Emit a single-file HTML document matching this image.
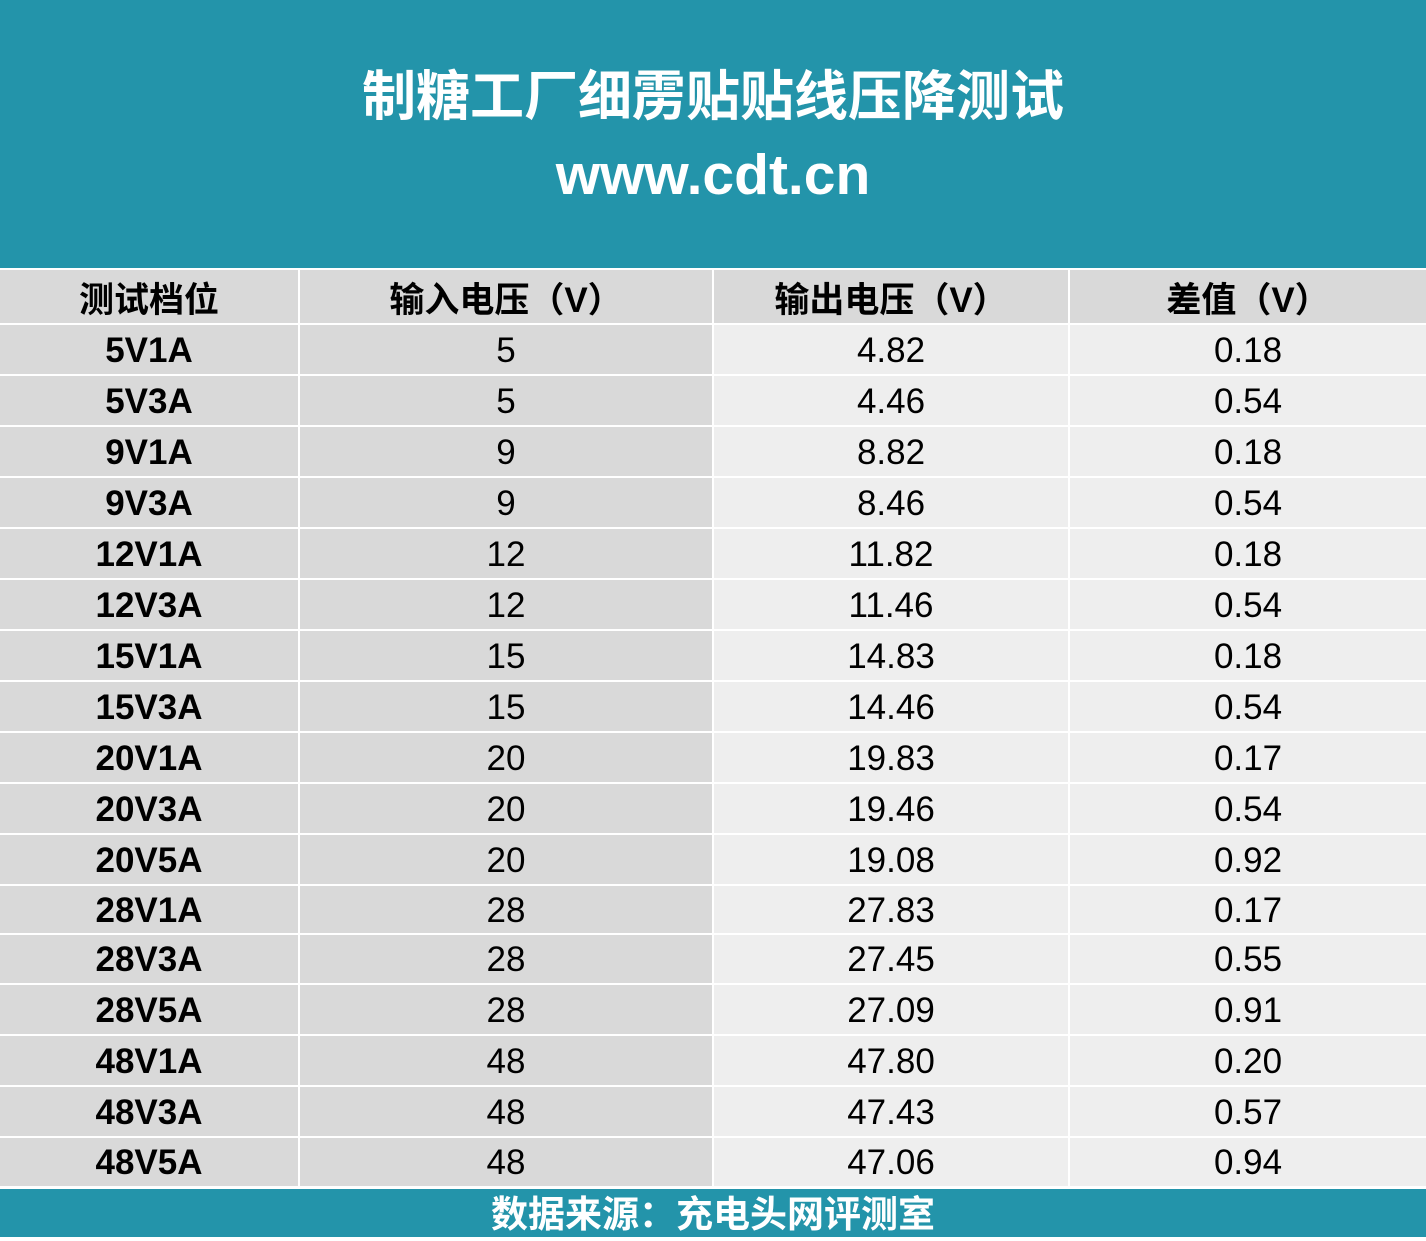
<!DOCTYPE html><html><head><meta charset="utf-8"><style>
body{margin:0;width:1426px;height:1237px;background:#fff;position:relative;overflow:hidden;font-family:"Liberation Sans","Noto Sans CJK SC",sans-serif}
.top{position:absolute;left:0;top:0;width:1426px;height:268px;background:#2394AA;color:#fff;text-align:center;font-weight:bold}
.t1{position:absolute;top:64px;width:100%;font-size:54px;line-height:66px}
.t2{position:absolute;top:144px;width:100%;font-size:57px;line-height:62px}
.c{position:absolute;display:flex;align-items:center;justify-content:center;font-size:35px;color:#000}
.g{background:#D9D9D9}.l{background:#EEEEEE}.b{font-weight:bold}
.foot{position:absolute;left:0;top:1189px;width:1426px;height:48px;background:#2394AA;color:#fff;font-weight:bold;font-size:37px;text-align:center;line-height:52px}
</style></head><body>
<div class="top"><div class="t1">制糖工厂细雳贴贴线压降测试</div><div class="t2">www.cdt.cn</div></div>
<div id="t"></div>
<div class="foot">数据来源：充电头网评测室</div>
<script>
var cols=[[0,298],[300,412],[714,354],[1070,356]];
var rows=[["测试档位","输入电压（V）","输出电压（V）","差值（V）"],
["5V1A","5","4.82","0.18"],["5V3A","5","4.46","0.54"],["9V1A","9","8.82","0.18"],["9V3A","9","8.46","0.54"],
["12V1A","12","11.82","0.18"],["12V3A","12","11.46","0.54"],["15V1A","15","14.83","0.18"],["15V3A","15","14.46","0.54"],
["20V1A","20","19.83","0.17"],["20V3A","20","19.46","0.54"],["20V5A","20","19.08","0.92"],["28V1A","28","27.83","0.17"],
["28V3A","28","27.45","0.55"],["28V5A","28","27.09","0.91"],["48V1A","48","47.80","0.20"],["48V3A","48","47.43","0.57"],["48V5A","48","47.06","0.94"]];
var tops=[270,325,376,427,478,529,580,631,682,733,784,835,886,935,985,1036,1087,1138,1188];
var h="";
for(var r=0;r<rows.length;r++){for(var c=0;c<4;c++){
var cls=(r==0||c<2)?"g":"l";if(r==0||c==0)cls+=" b";
h+='<div class="c '+cls+'" style="left:'+cols[c][0]+'px;width:'+cols[c][1]+'px;top:'+tops[r]+'px;height:'+(tops[r+1]-tops[r]-2)+'px;padding-top:2px;box-sizing:border-box">'+rows[r][c]+'</div>';}}
document.getElementById("t").innerHTML=h;
</script>
</body></html>
